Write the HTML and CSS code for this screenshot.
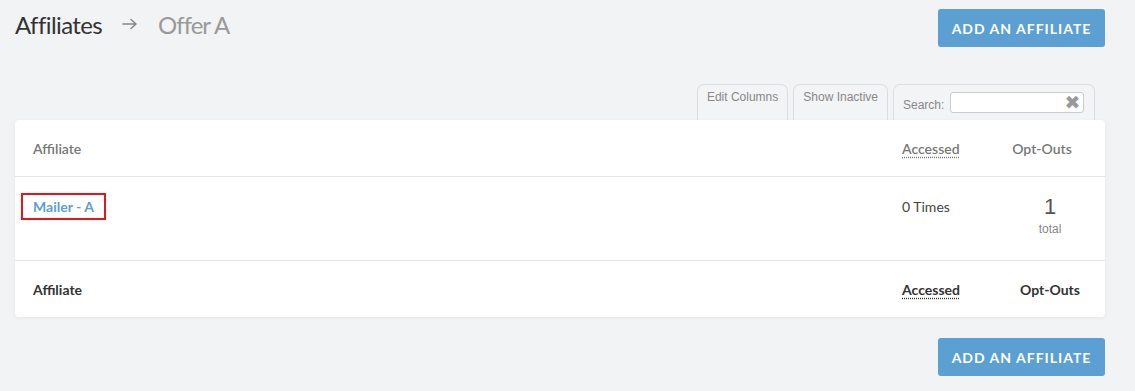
FILE: index.html
```html
<!DOCTYPE html>
<html>
<head>
<meta charset="utf-8">
<link rel="stylesheet" href="styles.css">
</head>
<body>
<div class="page">
  <div class="topbar">
    <h1 class="crumbs"><span class="crumb-main">Affiliates</span><svg class="crumb-arrow" width="15" height="12" viewBox="0 0 15 12"><path d="M1 6H14M9 1.5L14 6L9 10.5" fill="none" stroke="#888" stroke-width="1.6" stroke-linecap="round" stroke-linejoin="round"/></svg><span class="crumb-sub">Offer A</span></h1>
    <button class="btn">ADD AN AFFILIATE</button>
  </div>
  <div class="tabs">
    <div class="tab">Edit Columns</div>
    <div class="tab">Show Inactive</div>
    <div class="tab tab-search"><label>Search:</label><span class="search-box"><span class="clear">✖</span></span></div>
  </div>
  <div class="card">
    <div class="row row-head">
      <div class="cell">Affiliate</div>
      <div class="cell"><abbr>Accessed</abbr></div>
      <div class="cell center pad-sort">Opt-Outs</div>
    </div>
    <div class="row row-body">
      <div class="cell"><a class="link" href="#">Mailer - A</a></div>
      <div class="cell">0 Times</div>
      <div class="cell center"><div class="big">1</div><div class="small">total</div></div>
    </div>
    <div class="row row-foot">
      <div class="cell">Affiliate</div>
      <div class="cell"><abbr>Accessed</abbr></div>
      <div class="cell center">Opt-Outs</div>
    </div>
  </div>
  <div class="bottombar">
    <button class="btn">ADD AN AFFILIATE</button>
  </div>
</div>
</body>
</html>
```
FILE: styles.css
```css
html, body { margin: 0; padding: 0; }
body {
  background: #f2f3f5;
  font-family: "Source Sans Pro", "Lato", "Open Sans", sans-serif;
  color: #333;
}
.page { padding: 9px 30px 0 15px; }
.topbar { display: flex; justify-content: space-between; align-items: flex-start; height: 38px; }
.crumbs { margin: 0; font-weight: 400; font-size: 24px; display: flex; align-items: center; height: 30px; letter-spacing: -0.6px; }
.crumb-main { color: #333; }
.crumb-arrow { margin: 0 21px 0 20px; flex: none; }
.crumb-sub { color: #999; letter-spacing: -1px; }
.btn {
  width: 167px; height: 38px;
  background: #5b9fd3; color: #fff; border: 0; border-radius: 3px;
  font-family: inherit; font-size: 14px; font-weight: 700; letter-spacing: 1px;
  padding: 0;
}
.tabs { display: flex; justify-content: flex-end; gap: 5px; margin: 37px 10px 0 0; height: 36px; }
.tab {
  border: 1px solid #dcdde0; border-bottom: 0; border-radius: 7px 7px 0 0;
  font-family: "Liberation Sans", Arial, sans-serif; font-size: 12px; color: #888;
  padding: 5px 9px 0; background: #f3f4f6;
}
.tab-search { display: flex; align-items: flex-start; padding: 7px 9px 0 9px; width: 182px; }
.tab-search label { margin-top: 6px; margin-right: 6px; }
.search-box {
  width: 132px; height: 19px; background: #fff; border: 1px solid #ccc; border-radius: 3px;
  display: flex; justify-content: flex-end; align-items: center;
}
.clear { color: #999; font-size: 19px; line-height: 19px; margin-right: 3px; font-family: "DejaVu Sans", sans-serif; }
.card {
  background: #fff; border-radius: 4px; box-shadow: 0 1px 4px rgba(0,0,0,0.06);
  position: relative;
}
.row { display: grid; grid-template-columns: 1fr 111px 110px; }
.row + .row { border-top: 1px solid #e4e5e8; }
.cell { padding-left: 18px; font-size: 14px; }
.center { text-align: center; padding-left: 0; }
.pad-sort { padding-right: 16px; }
.row-head { height: 56px; align-items: center; color: #777; font-weight: 600; }
.row-foot { height: 56px; align-items: center; color: #333; font-weight: 700; }
abbr { text-decoration: underline dotted; text-underline-offset: 3px; }
.row-body { height: 83px; align-items: start; color: #444; }
.row-body .cell { padding-top: 21px; }
.row-body .center { padding-top: 18px; }
.link {
  color: #5b9fd3; text-decoration: none; font-weight: 700;
  outline: 2px solid #e8141b; outline-offset: 0; padding: 3px 10px; margin-left: -10px;
}
.big { font-family: "Liberation Sans", Arial, sans-serif; font-size: 22px; color: #555; line-height: 24px; }
.small { font-family: "Liberation Sans", Arial, sans-serif; font-size: 12px; color: #888; margin-top: 3px; }
.bottombar { display: flex; justify-content: flex-end; margin-top: 21px; }
```
